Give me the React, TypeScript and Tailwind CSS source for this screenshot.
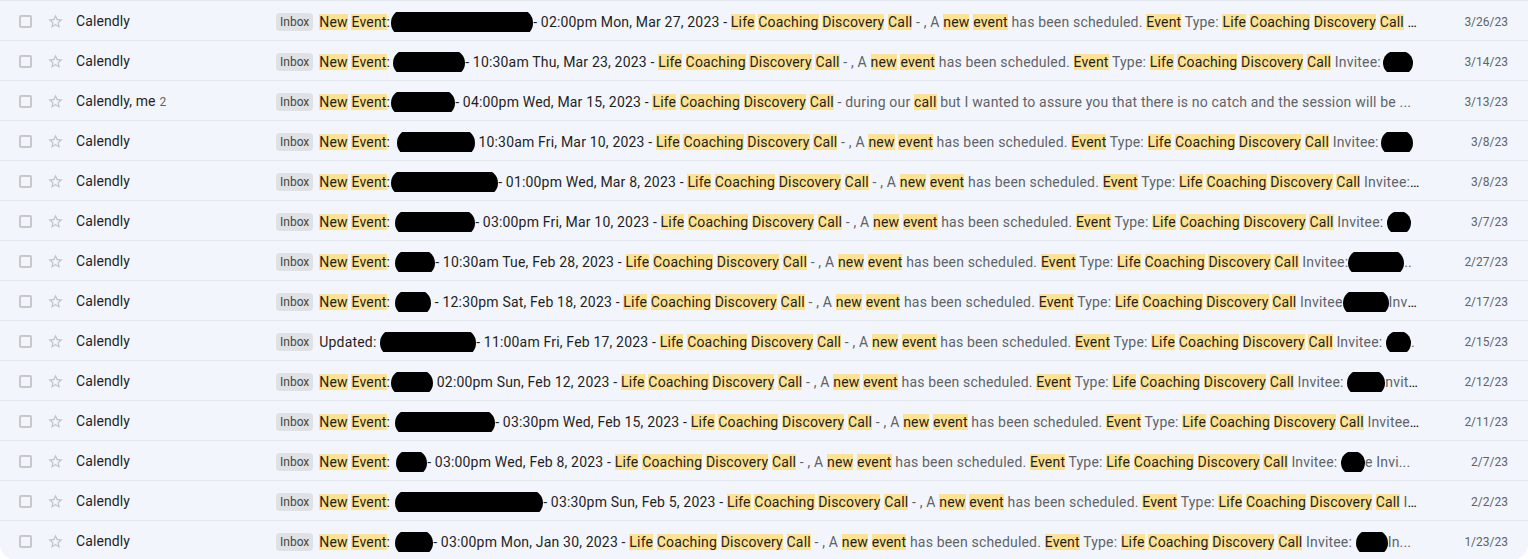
import type { ReactNode } from 'react'

type Blob = [number, number, number]

interface Mail {
  sender: string
  count?: number
  lead: string
  blob: Blob
  after: string
  snippet: string
  inv?: Blob
  tail?: string
  date: string
}

const LCDC = 'Life Coaching Discovery Call'
const SCHED = ` - , A new event has been scheduled. Event Type: ${LCDC}`

const MAILS: Mail[] = [
  { sender: 'Calendly', lead: 'New Event:', blob: [1, 142, 28], after: `- 02:00pm Mon, Mar 27, 2023 - ${LCDC}`, snippet: `${SCHED} Invitee: Jennifer`, date: '3/26/23' },
  { sender: 'Calendly', lead: 'New Event:', blob: [3, 72, 26], after: `- 10:30am Thu, Mar 23, 2023 - ${LCDC}`, snippet: `${SCHED} Invitee:`, inv: [2, 30, 24], date: '3/14/23' },
  { sender: 'Calendly, me', count: 2, lead: 'New Event:', blob: [1, 64, 26], after: `- 04:00pm Wed, Mar 15, 2023 - ${LCDC}`, snippet: ' - during our call but I wanted to assure you that there is no catch and the session will be ...', date: '3/13/23' },
  { sender: 'Calendly', lead: 'New Event: ', blob: [3, 78, 28], after: ` 10:30am Fri, Mar 10, 2023 - ${LCDC}`, snippet: `${SCHED} Invitee:`, inv: [2, 32, 26], date: '3/8/23' },
  { sender: 'Calendly', lead: 'New Event:', blob: [1, 107, 26], after: `- 01:00pm Wed, Mar 8, 2023 - ${LCDC}`, snippet: `${SCHED} Invitee: Sarah Collins`, date: '3/8/23' },
  { sender: 'Calendly', lead: 'New Event:', blob: [5, 80, 26], after: `- 03:00pm Fri, Mar 10, 2023 - ${LCDC}`, snippet: `${SCHED} Invitee: `, inv: [0, 24, 24], date: '3/7/23' },
  { sender: 'Calendly', lead: 'New Event:', blob: [5, 40, 26], after: `- 10:30am Tue, Feb 28, 2023 - ${LCDC}`, snippet: `${SCHED} Invitee:`, inv: [0, 56, 26], tail: '..', date: '2/27/23' },
  { sender: 'Calendly', lead: 'New Event:', blob: [5, 36, 26], after: ` - 12:30pm Sat, Feb 18, 2023 - ${LCDC}`, snippet: `${SCHED} Invitee`, inv: [0, 46, 26], tail: 'Invi...', date: '2/17/23' },
  { sender: 'Calendly', lead: 'Updated: ', blob: [0, 96, 28], after: `- 11:00am Fri, Feb 17, 2023 - ${LCDC}`, snippet: `${SCHED} Invitee: `, inv: [0, 25, 24], tail: '.', date: '2/15/23' },
  { sender: 'Calendly', lead: 'New Event:', blob: [1, 42, 26], after: ` 02:00pm Sun, Feb 12, 2023 - ${LCDC}`, snippet: `${SCHED} Invitee: `, inv: [0, 38, 26], tail: 'nvit...', date: '2/12/23' },
  { sender: 'Calendly', lead: 'New Event:', blob: [5, 100, 26], after: `- 03:30pm Wed, Feb 15, 2023 - ${LCDC}`, snippet: `${SCHED} Invitee: Mark`, date: '2/11/23' },
  { sender: 'Calendly', lead: 'New Event:', blob: [6, 31, 26], after: `- 03:00pm Wed, Feb 8, 2023 - ${LCDC}`, snippet: `${SCHED} Invitee: `, inv: [0, 24, 24], tail: 'e Invi...', date: '2/7/23' },
  { sender: 'Calendly', lead: 'New Event:', blob: [5, 148, 26], after: `- 03:30pm Sun, Feb 5, 2023 - ${LCDC}`, snippet: `${SCHED} Invitee: Anna`, date: '2/2/23' },
  { sender: 'Calendly', lead: 'New Event:', blob: [5, 38, 26], after: `- 03:00pm Mon, Jan 30, 2023 - ${LCDC}`, snippet: `${SCHED} Invitee: `, inv: [0, 32, 26], tail: 'In...', date: '1/23/23' },
]

const TERMS = /(\b(?:new|event|life|coaching|discovery|call)\b)/gi

function hl(text: string): ReactNode[] {
  return text.split(TERMS).map((part, i) =>
    i % 2 === 1 ? (
      <span key={i} className="bg-[#fde293] text-[#1f1f1f]">{part}</span>
    ) : (
      part
    ),
  )
}

function Redacted({ blob }: { blob: Blob }) {
  const [ml, w, h] = blob
  return (
    <span
      className="inline-block rounded-full bg-black align-middle -my-[6px]"
      style={{ marginLeft: ml, width: w, height: h }}
    />
  )
}

function StarOutline() {
  return (
    <svg width="17" height="17" viewBox="0 0 24 24" className="shrink-0 fill-[#bfc2c5]">
      <path d="M22 9.24l-7.19-.62L12 2 9.19 8.63 2 9.24l5.46 4.73L5.82 21 12 17.27 18.18 21l-1.63-7.03L22 9.24zM12 15.4l-3.76 2.27 1-4.28-3.32-2.88 4.38-.38L12 6.1l1.71 4.04 4.38.38-3.32 2.88 1 4.28L12 15.4z" />
    </svg>
  )
}

export default function App() {
  return (
    <div className="min-h-[559px] bg-white font-['Roboto','Liberation_Sans',Arial,sans-serif]">
      <div className="overflow-hidden rounded-b-[16px] bg-[#f2f6fc]">
        {MAILS.map((m, idx) => (
          <div
            key={idx}
            className="flex h-[40px] items-center border-t border-[#e3e8ef] pt-[2px] text-[14px]"
          >
            <div className="flex w-[76px] shrink-0 items-center pl-[19px]">
              <span className="h-[13px] w-[13px] shrink-0 rounded-[2px] border-2 border-[#c6c8ca]" />
              <span className="ml-[15px]">
                <StarOutline />
              </span>
            </div>
            <div className="w-[200px] shrink-0 truncate tracking-[0.1px] text-[#1f1f1f]">
              {m.sender}
              {m.count && <span className="ml-[4px] text-[12px] text-[#5f6368]">{m.count}</span>}
            </div>
            <div className="flex min-w-0 flex-1 items-center">
              <span className="mr-[6px] shrink-0 rounded-[4px] bg-[#dfe2e5] px-[4px] text-[12px] leading-[18px] text-[#444746]">
                Inbox
              </span>
              <div className="min-w-0 flex-1 truncate leading-[20px] tracking-[0.18px]">
                <span className="text-[#1f1f1f]">
                  {hl(m.lead)}
                  <Redacted blob={m.blob} />
                  {hl(m.after)}
                </span>
                <span className="text-[#5f6368]">
                  {hl(m.snippet)}
                  {m.inv && <Redacted blob={m.inv} />}
                  {m.tail}
                </span>
              </div>
            </div>
            <div className="w-[108px] shrink-0 pr-[20px] text-right text-[12px] text-[#5f6368]">
              {m.date}
            </div>
          </div>
        ))}
      </div>
    </div>
  )
}
